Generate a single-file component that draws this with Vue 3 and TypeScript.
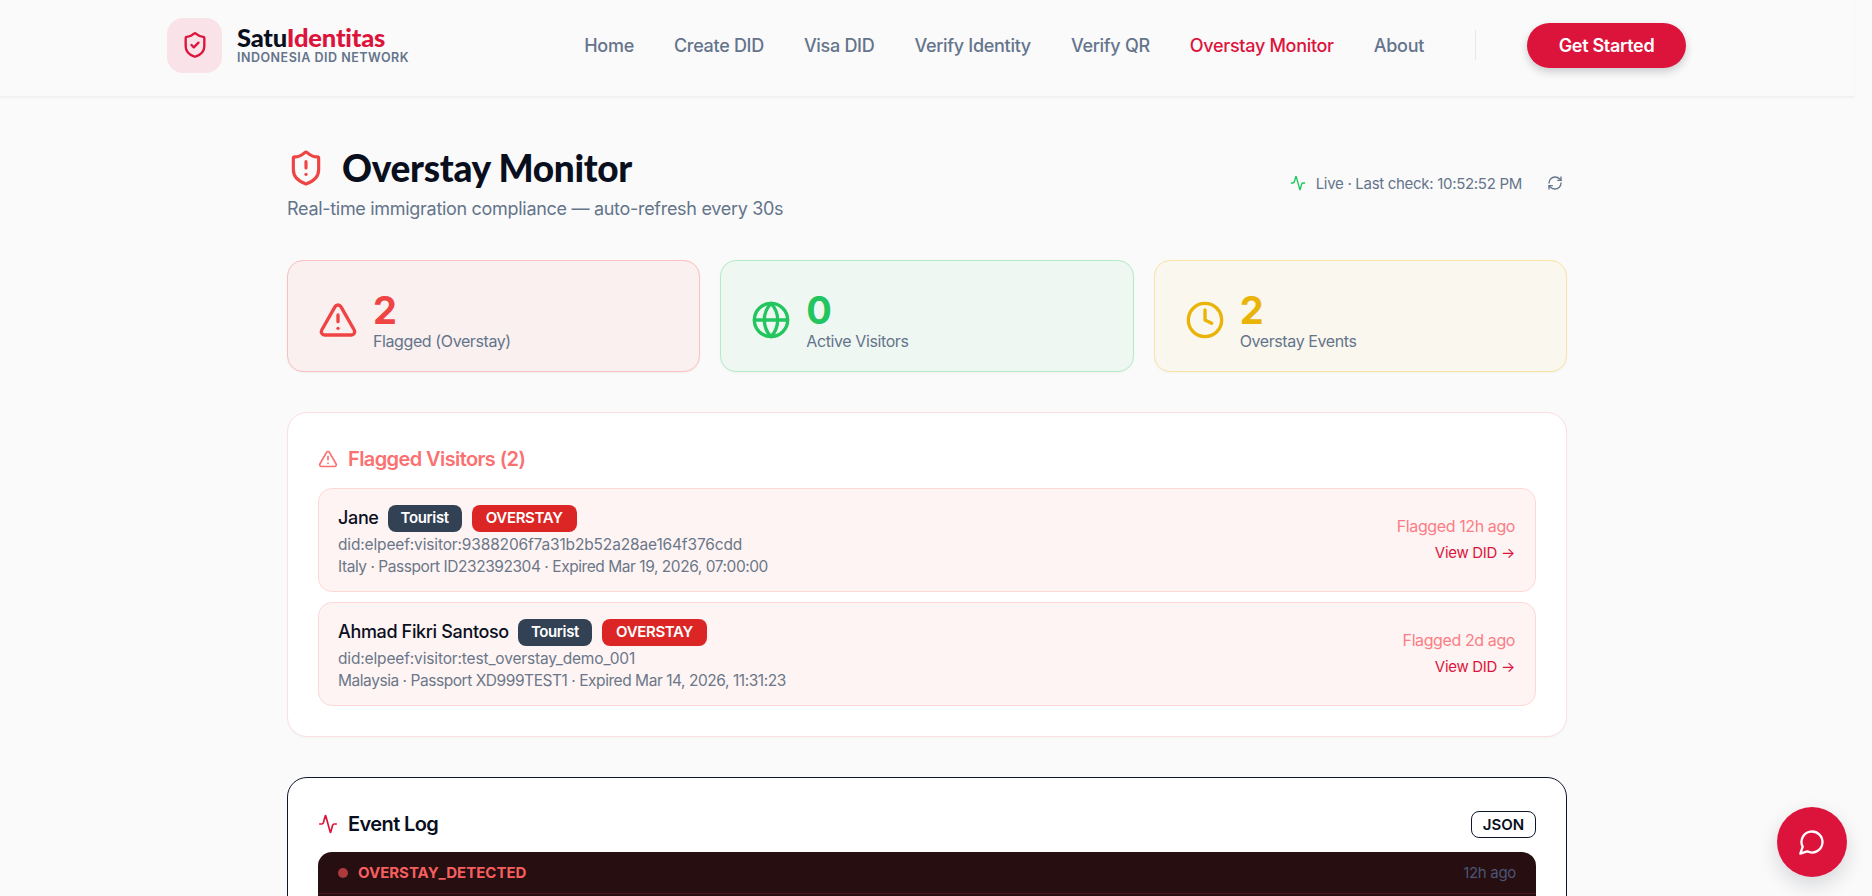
<template>
  <div class="page">
    <header class="topbar">
      <div class="topbar-inner">
        <a class="brand">
          <span class="brand-mark">
            <svg class="ico" viewBox="0 0 24 24"><path v-for="d in icons.shieldCheck" :key="d" :d="d" /></svg>
          </span>
          <span class="brand-text">
            <span class="brand-name">Satu<em>Identitas</em></span>
            <span class="brand-sub">INDONESIA DID NETWORK</span>
          </span>
        </a>
        <nav class="nav">
          <a v-for="link in navLinks" :key="link" :class="{ active: link === 'Overstay Monitor' }">{{ link }}</a>
        </nav>
        <span class="divider"></span>
        <button class="cta">Get Started</button>
      </div>
    </header>

    <main class="content">
      <section class="heading">
        <div>
          <h1>
            <svg class="ico" viewBox="0 0 24 24"><path v-for="d in icons.shieldAlert" :key="d" :d="d" /></svg>
            Overstay Monitor
          </h1>
          <p>Real-time immigration compliance — auto-refresh every 30s</p>
        </div>
        <div class="live">
          <svg class="ico pulse" viewBox="0 0 24 24"><path v-for="d in icons.activity" :key="d" :d="d" /></svg>
          <span>Live · Last check: 10:52:52 PM</span>
          <svg class="ico refresh" viewBox="0 0 24 24"><path v-for="d in icons.refresh" :key="d" :d="d" /></svg>
        </div>
      </section>

      <section class="stats">
        <div v-for="stat in stats" :key="stat.label" class="stat" :class="stat.tone">
          <svg class="ico" viewBox="0 0 24 24"><path v-for="d in icons[stat.icon]" :key="d" :d="d" /></svg>
          <div class="stat-text">
            <div class="stat-value">{{ stat.value }}</div>
            <div class="stat-label">{{ stat.label }}</div>
          </div>
        </div>
      </section>

      <section class="panel flagged">
        <h2>
          <svg class="ico" viewBox="0 0 24 24"><path v-for="d in icons.triangle" :key="d" :d="d" /></svg>
          Flagged Visitors (2)
        </h2>
        <div class="rows">
          <article v-for="v in visitors" :key="v.did" class="row">
            <div class="row-main">
              <div class="row-name">
                <span>{{ v.name }}</span>
                <span class="badge slate">Tourist</span>
                <span class="badge red">OVERSTAY</span>
              </div>
              <div class="row-did">{{ v.did }}</div>
              <div class="row-meta">{{ v.meta }}</div>
            </div>
            <div class="row-side">
              <span class="row-ago">{{ v.ago }}</span>
              <a class="row-link">View DID →</a>
            </div>
          </article>
        </div>
      </section>

      <section class="panel events">
        <div class="events-head">
          <h2>
            <svg class="ico" viewBox="0 0 24 24"><path v-for="d in icons.activity" :key="d" :d="d" /></svg>
            Event Log
          </h2>
          <button class="json">JSON</button>
        </div>
        <div class="event">
          <div class="event-head">
            <span class="dot"></span>
            <span class="event-name">OVERSTAY_DETECTED</span>
            <span class="event-ago">12h ago</span>
          </div>
          <div class="event-body"></div>
        </div>
      </section>
    </main>

    <button class="chat" aria-label="Chat">
      <svg class="ico" viewBox="0 0 24 24"><path v-for="d in icons.message" :key="d" :d="d" /></svg>
    </button>
  </div>
</template>

<script setup lang="ts">
const SHIELD =
  'M20 13c0 5-3.5 7.5-7.66 8.95a1 1 0 0 1-.67-.01C7.5 20.5 4 18 4 13V6a1 1 0 0 1 1-1c2 0 4.5-1.2 6.24-2.72a1.17 1.17 0 0 1 1.52 0C14.51 3.81 17 5 19 5a1 1 0 0 1 1 1z';
const CIRCLE = 'M22 12a10 10 0 1 1-20 0 10 10 0 0 1 20 0';

const icons: Record<string, string[]> = {
  shieldCheck: [SHIELD, 'm9 12 2 2 4-4'],
  shieldAlert: [SHIELD, 'M12 8v4', 'M12 16h.01'],
  triangle: [
    'm21.73 18-8-14a2 2 0 0 0-3.48 0l-8 14A2 2 0 0 0 4 21h16a2 2 0 0 0 1.73-3',
    'M12 9v4',
    'M12 17h.01'
  ],
  globe: [CIRCLE, 'M12 2a14.5 14.5 0 0 0 0 20 14.5 14.5 0 0 0 0-20', 'M2 12h20'],
  clock: [CIRCLE, 'M12 6v6l4 2'],
  activity: [
    'M22 12h-2.48a2 2 0 0 0-1.93 1.46l-2.35 8.36a.25.25 0 0 1-.48 0L9.24 2.18a.25.25 0 0 0-.48 0l-2.35 8.36A2 2 0 0 1 4.49 12H2'
  ],
  refresh: [
    'M3 12a9 9 0 0 1 9-9 9.75 9.75 0 0 1 6.74 2.74L21 8',
    'M21 3v5h-5',
    'M21 12a9 9 0 0 1-9 9 9.75 9.75 0 0 1-6.74-2.74L3 16',
    'M8 16H3v5'
  ],
  message: ['M7.9 20A9 9 0 1 0 4 16.1L2 22Z']
};

const navLinks = [
  'Home',
  'Create DID',
  'Visa DID',
  'Verify Identity',
  'Verify QR',
  'Overstay Monitor',
  'About'
];

const stats = [
  { label: 'Flagged (Overstay)', value: 2, icon: 'triangle', tone: 'red' },
  { label: 'Active Visitors', value: 0, icon: 'globe', tone: 'green' },
  { label: 'Overstay Events', value: 2, icon: 'clock', tone: 'amber' }
];

const visitors = [
  {
    name: 'Jane',
    did: 'did:elpeef:visitor:9388206f7a31b2b52a28ae164f376cdd',
    meta: 'Italy · Passport ID232392304 · Expired Mar 19, 2026, 07:00:00',
    ago: 'Flagged 12h ago'
  },
  {
    name: 'Ahmad Fikri Santoso',
    did: 'did:elpeef:visitor:test_overstay_demo_001',
    meta: 'Malaysia · Passport XD999TEST1 · Expired Mar 14, 2026, 11:31:23',
    ago: 'Flagged 2d ago'
  }
];
</script>

<style>
html,
body {
  margin: 0;
  height: 100%;
  overflow: hidden;
  background: #fafafa;
}
</style>

<style scoped>
.page {
  height: 896px;
  overflow: hidden;
  padding-right: 18px;
  font-family: Inter, "Noto Sans", sans-serif;
  color: #0a0f1e;
  background: #fafafa;
}

.ico {
  display: block;
  fill: none;
  stroke: currentColor;
  stroke-width: 2;
  stroke-linecap: round;
  stroke-linejoin: round;
}

button {
  font-family: inherit;
  cursor: pointer;
}

.topbar {
  height: 96px;
  border-bottom: 1px solid #f0f0f2;
  box-shadow: 0 1px 3px rgba(15, 23, 42, 0.04);
}

.topbar-inner {
  height: 100%;
  box-sizing: border-box;
  padding: 0 168px 6px 167px;
  display: flex;
  align-items: center;
}

.brand {
  display: flex;
  align-items: center;
  gap: 15px;
}

.brand-mark {
  width: 55px;
  height: 55px;
  border-radius: 16px;
  background: #fae3e8;
  color: #dc143c;
  display: flex;
  align-items: center;
  justify-content: center;
}

.brand-mark .ico {
  width: 28px;
  height: 28px;
}

.brand-text {
  display: flex;
  flex-direction: column;
}

.brand-name {
  font-family: Lato, sans-serif;
  font-size: 25.5px;
  font-weight: 900;
  line-height: 26px;
  letter-spacing: -0.2px;
}

.brand-name em {
  font-style: normal;
  color: #dc143c;
}

.brand-sub {
  font-size: 12.5px;
  font-weight: 600;
  line-height: 16px;
  color: #64748b;
  letter-spacing: 0.5px;
}

.nav {
  margin-left: auto;
  display: flex;
  gap: 40px;
}

.nav a {
  font-size: 18px;
  font-weight: 500;
  letter-spacing: -0.3px;
  color: #64748b;
}

.nav a.active {
  color: #dc143c;
}

.divider {
  width: 1px;
  height: 30px;
  background: #e5e7eb;
  margin: 0 51px 0 51px;
}

.cta {
  width: 159px;
  height: 45px;
  border: 0;
  border-radius: 23px;
  background: #dc143c;
  color: #fff;
  font-size: 18px;
  font-weight: 600;
  letter-spacing: -0.3px;
  box-shadow: 0 4px 8px rgba(15, 23, 42, 0.2);
}

.content {
  width: 1280px;
  margin: 0 auto;
  padding-top: 48px;
}

.heading {
  display: flex;
  justify-content: space-between;
  align-items: center;
}

.heading h1 {
  margin: 0;
  display: flex;
  align-items: center;
  gap: 17px;
  font-family: Lato, sans-serif;
  font-size: 37px;
  font-weight: 900;
  line-height: 46px;
  letter-spacing: -0.3px;
}

.heading h1 .ico {
  width: 38px;
  height: 38px;
  color: #ef4444;
}

.heading p {
  margin: 4px 0 0;
  font-size: 18px;
  line-height: 28px;
  letter-spacing: -0.3px;
  color: #64748b;
}

.live {
  display: flex;
  align-items: center;
  font-size: 15px;
  letter-spacing: -0.3px;
  color: #64748b;
  padding-right: 4px;
  margin-bottom: 2px;
}

.live .pulse {
  width: 16px;
  height: 16px;
  color: #22c55e;
  margin-right: 10px;
}

.live .refresh {
  width: 16px;
  height: 16px;
  margin-left: 25px;
}

.stats {
  display: grid;
  grid-template-columns: repeat(3, 1fr);
  gap: 20px;
  margin-top: 37px;
}

.stat {
  height: 112px;
  box-sizing: border-box;
  border: 1.5px solid;
  border-radius: 16px;
  padding: 0 30px;
  display: flex;
  align-items: center;
  gap: 15px;
  box-shadow: 0 1px 2px rgba(15, 23, 42, 0.04);
}

.stat .ico {
  width: 40px;
  height: 40px;
  margin-top: 8px;
}

.stat-text {
  margin-top: 9px;
}

.stat-value {
  font-size: 38px;
  font-weight: 700;
  line-height: 40px;
}

.stat-label {
  font-size: 16px;
  line-height: 22px;
  letter-spacing: -0.4px;
  color: #64748b;
}

.stat.red {
  background: #f9f0ef;
  border-color: #fbc0c0;
  color: #ef4444;
}

.stat.green {
  background: #eff7f2;
  border-color: #b3ebc7;
  color: #22c55e;
}

.stat.amber {
  background: #faf7ef;
  border-color: #fae3a4;
  color: #eab308;
}

.panel {
  background: #fff;
  border-radius: 20px;
  padding: 30px;
  margin-top: 40px;
}

.panel h2 {
  margin: 0;
  display: flex;
  align-items: center;
  gap: 10px;
  font-size: 20px;
  font-weight: 600;
  line-height: 28px;
  letter-spacing: -0.6px;
}

.panel h2 .ico {
  width: 20px;
  height: 20px;
}

.flagged {
  border: 1px solid #fcdfe1;
  box-shadow: 0 1px 2px rgba(15, 23, 42, 0.03);
}

.flagged h2 {
  color: #fb7171;
  margin-top: 2px;
}

.rows {
  margin-top: 15px;
  display: flex;
  flex-direction: column;
  gap: 10px;
}

.row {
  height: 104px;
  box-sizing: border-box;
  border: 1.5px solid #fed7d7;
  border-radius: 14px;
  background: #fef4f3;
  padding: 0 20px 0 19px;
  display: flex;
  align-items: center;
  justify-content: space-between;
}

.row-main {
  padding-top: 2px;
}

.row-name {
  display: flex;
  align-items: center;
  gap: 9px;
  font-size: 18px;
  font-weight: 500;
  letter-spacing: -0.35px;
  line-height: 28px;
}

.badge {
  height: 27px;
  border-radius: 8px;
  padding: 0 13px;
  display: inline-flex;
  align-items: center;
  color: #fff;
  font-size: 15px;
  font-weight: 600;
}

.badge.slate {
  background: #334155;
}

.badge.red {
  margin-left: 1px;
  padding: 0 14px;
  background: #dc2626;
}

.row-did,
.row-meta {
  color: #6b7789;
  font-size: 15.5px;
  line-height: 22px;
}

.row-did {
  margin-top: 2px;
  letter-spacing: -0.15px;
}

.row-meta {
  letter-spacing: -0.45px;
}

.row-side {
  display: flex;
  flex-direction: column;
  align-items: flex-end;
  gap: 7px;
  padding-bottom: 2px;
}

.row-ago {
  font-size: 16px;
  letter-spacing: -0.4px;
  color: #fb7d85;
}

.row-link {
  font-size: 15px;
  letter-spacing: -0.3px;
  color: #dc143c;
}

.events {
  border: 1px solid #0f172a;
}

.events-head {
  display: flex;
  align-items: center;
  justify-content: space-between;
  padding-top: 2px;
}

.events h2 .ico {
  color: #dc143c;
}

.json {
  width: 65px;
  height: 27px;
  padding: 0;
  border: 1px solid #0f172a;
  border-radius: 8px;
  background: #fff;
  color: #0a0f1e;
  font-size: 15px;
  font-weight: 600;
}

.event {
  margin-top: 14px;
  border-radius: 14px 14px 0 0;
  background: #260e11;
}

.event-head {
  height: 41px;
  padding: 0 20px;
  display: flex;
  align-items: center;
  gap: 10px;
  border-bottom: 1px solid #4a1a1d;
}

.dot {
  width: 10px;
  height: 10px;
  border-radius: 50%;
  background: #ad3a3c;
}

.event-name {
  font-size: 15px;
  font-weight: 700;
  color: #f75f5f;
}

.event-ago {
  margin-left: auto;
  font-size: 15px;
  letter-spacing: -0.3px;
  color: #4b5675;
}

.event-body {
  height: 60px;
}

.chat {
  position: fixed;
  right: 25px;
  bottom: 19px;
  width: 70px;
  height: 70px;
  border: 0;
  border-radius: 50%;
  background: #dc143c;
  color: #fff;
  display: flex;
  align-items: center;
  justify-content: center;
  box-shadow: 0 8px 20px rgba(15, 23, 42, 0.15);
}

.chat .ico {
  width: 28px;
  height: 28px;
}
</style>
